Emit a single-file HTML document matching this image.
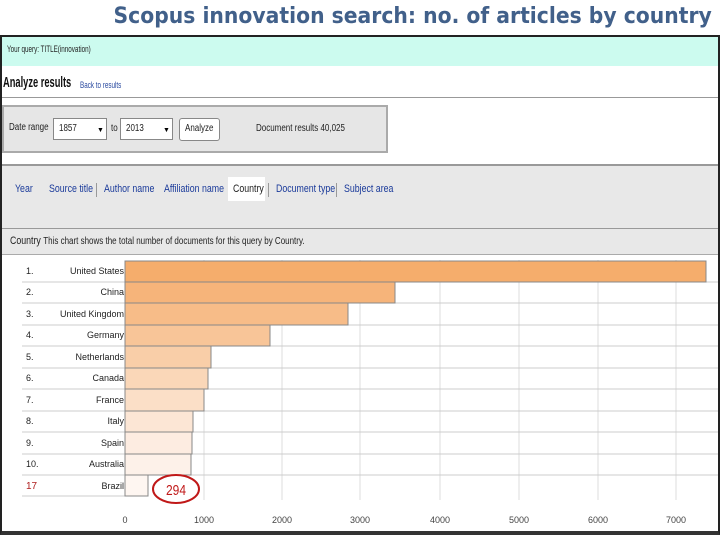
<!DOCTYPE html>
<html><head><style>
*{margin:0;padding:0;box-sizing:border-box}
body{width:720px;height:540px;background:#fff;position:relative;overflow:hidden;font-family:"Liberation Sans",sans-serif}
.a{position:absolute}
.t{font-size:11px;color:#222;transform:scaleX(.8);transform-origin:left center;white-space:nowrap}
.n{color:#1a3a9a}
</style></head><body>
<div class="a" style="right:8px;top:4px;font-size:22px;font-weight:bold;color:#41608a;font-family:'DejaVu Sans',sans-serif;transform:scaleX(.925);transform-origin:right;white-space:nowrap">Scopus innovation search: no. of articles by country</div>
<div class="a" style="left:0;top:35px;width:720px;height:500px;border:2px solid #222;border-bottom:4px solid #333;background:#fff"></div>
<div class="a" style="left:2px;top:37px;width:716px;height:29px;background:#ccfbef"></div>
<div class="a t" style="left:7px;top:44px;font-size:9px;transform:scaleX(.7)">Your query: TITLE(innovation)</div>
<div class="a t" style="left:3px;top:74px;font-size:15px;font-weight:bold;color:#111;transform:scaleX(.62)">Analyze results</div>
<div class="a t" style="left:80px;top:80px;font-size:9px;color:#2a4aa0;transform:scaleX(.7)">Back to results</div>
<div class="a" style="left:2px;top:97px;width:716px;height:1px;background:#999"></div>
<div class="a" style="left:2px;top:105px;width:386px;height:48px;background:#e6e6e6;border:2px solid #aaa"></div>
<div class="a t" style="left:9px;top:122px;font-size:10px">Date range</div>
<div class="a" style="left:53px;top:118px;width:54px;height:22px;background:#fff;border:1px solid #888"></div>
<div class="a t" style="left:59px;top:123px;font-size:10px">1857</div>
<div class="a" style="left:97px;top:127px;font-size:7px">▼</div>
<div class="a t" style="left:111px;top:123px;font-size:10px">to</div>
<div class="a" style="left:120px;top:118px;width:53px;height:22px;background:#fff;border:1px solid #888"></div>
<div class="a t" style="left:126px;top:123px;font-size:10px">2013</div>
<div class="a" style="left:163px;top:127px;font-size:7px">▼</div>
<div class="a" style="left:179px;top:118px;width:41px;height:23px;background:#fff;border:1px solid #888;border-radius:3px"></div>
<div class="a t" style="left:185px;top:123px;font-size:10px">Analyze</div>
<div class="a t" style="left:256px;top:123px;font-size:10px">Document results 40,025</div>
<div class="a" style="left:2px;top:164px;width:716px;height:90px;background:#e8e8e8;border-top:2px solid #999"></div>
<div class="a" style="left:2px;top:228px;width:716px;height:1px;background:#999"></div>
<div class="a" style="left:2px;top:254px;width:716px;height:1px;background:#aaa"></div>
<div class="a" style="left:228px;top:177px;width:37px;height:24px;background:#fff"></div>
<div class="a t n" style="left:15px;top:183px">Year</div>
<div class="a t n" style="left:49px;top:183px">Source title</div>
<div class="a" style="left:96px;top:183px;width:1px;height:14px;background:#999"></div>
<div class="a t n" style="left:104px;top:183px">Author name</div>
<div class="a t n" style="left:164px;top:183px">Affiliation name</div>
<div class="a t" style="left:233px;top:183px">Country</div>
<div class="a" style="left:268px;top:183px;width:1px;height:14px;background:#999"></div>
<div class="a t n" style="left:276px;top:183px">Document type</div>
<div class="a" style="left:336px;top:183px;width:1px;height:14px;background:#999"></div>
<div class="a t n" style="left:344px;top:183px">Subject area</div>
<div class="a t" style="left:10px;top:235px">Country <span style="font-size:10px">This chart shows the total number of documents for this query by Country.</span></div>
<svg class="a" style="left:0;top:255px" width="718" height="280">
<g stroke="#ddd"><line x1="204" y1="5" x2="204" y2="245"/><line x1="282" y1="5" x2="282" y2="245"/><line x1="360" y1="5" x2="360" y2="245"/><line x1="440" y1="5" x2="440" y2="245"/><line x1="519" y1="5" x2="519" y2="245"/><line x1="598" y1="5" x2="598" y2="245"/><line x1="676" y1="5" x2="676" y2="245"/></g>
<g stroke="#ccc">
<line x1="22" y1="27" x2="718" y2="27"/><line x1="22" y1="48" x2="718" y2="48"/><line x1="22" y1="70" x2="718" y2="70"/><line x1="22" y1="91" x2="718" y2="91"/><line x1="22" y1="113" x2="718" y2="113"/><line x1="22" y1="134" x2="718" y2="134"/><line x1="22" y1="156" x2="718" y2="156"/><line x1="22" y1="177" x2="718" y2="177"/><line x1="22" y1="199" x2="718" y2="199"/><line x1="22" y1="220" x2="718" y2="220"/><line x1="22" y1="241" x2="125" y2="241"/></g>
<g stroke="#888" stroke-width="1">
<rect x="125" y="6" width="581" height="21" fill="#f5ad6c"/>
<rect x="125" y="27" width="270" height="21" fill="#f6b47a"/>
<rect x="125" y="48" width="223" height="22" fill="#f7bc88"/>
<rect x="125" y="70" width="145" height="21" fill="#f8c598"/>
<rect x="125" y="91" width="86" height="22" fill="#f9cea8"/>
<rect x="125" y="113" width="83" height="21" fill="#fad7b8"/>
<rect x="125" y="134" width="79" height="22" fill="#fbdfc7"/>
<rect x="125" y="156" width="68" height="21" fill="#fce6d5"/>
<rect x="125" y="177" width="67" height="22" fill="#fdece1"/>
<rect x="125" y="199" width="66" height="21" fill="#fdf1e9"/>
<rect x="125" y="220" width="23" height="21" fill="#fef6f1"/>
</g>
<g font-family="Liberation Sans" font-size="9" fill="#222">
<text x="26" y="19">1.</text><text x="26" y="40">2.</text><text x="26" y="62">3.</text><text x="26" y="83">4.</text><text x="26" y="105">5.</text><text x="26" y="126">6.</text><text x="26" y="148">7.</text><text x="26" y="169">8.</text><text x="26" y="191">9.</text><text x="26" y="212">10.</text>
<text x="26" y="234" fill="#b02020" font-size="10">17</text>
<g text-anchor="end"><text x="124" y="19">United States</text><text x="124" y="40">China</text><text x="124" y="62">United Kingdom</text><text x="124" y="83">Germany</text><text x="124" y="105">Netherlands</text><text x="124" y="126">Canada</text><text x="124" y="148">France</text><text x="124" y="169">Italy</text><text x="124" y="191">Spain</text><text x="124" y="212">Australia</text><text x="124" y="234">Brazil</text></g>
<g text-anchor="middle" fill="#444"><text x="125" y="268">0</text><text x="204" y="268">1000</text><text x="282" y="268">2000</text><text x="360" y="268">3000</text><text x="440" y="268">4000</text><text x="519" y="268">5000</text><text x="598" y="268">6000</text><text x="676" y="268">7000</text></g>
</g>
<ellipse cx="176" cy="234" rx="23" ry="14" fill="none" stroke="#c01818" stroke-width="2"/>
<text x="176" y="240" text-anchor="middle" font-family="Liberation Sans" font-size="15" fill="#c01818" textLength="20" lengthAdjust="spacingAndGlyphs">294</text>
</svg>
</body></html>
